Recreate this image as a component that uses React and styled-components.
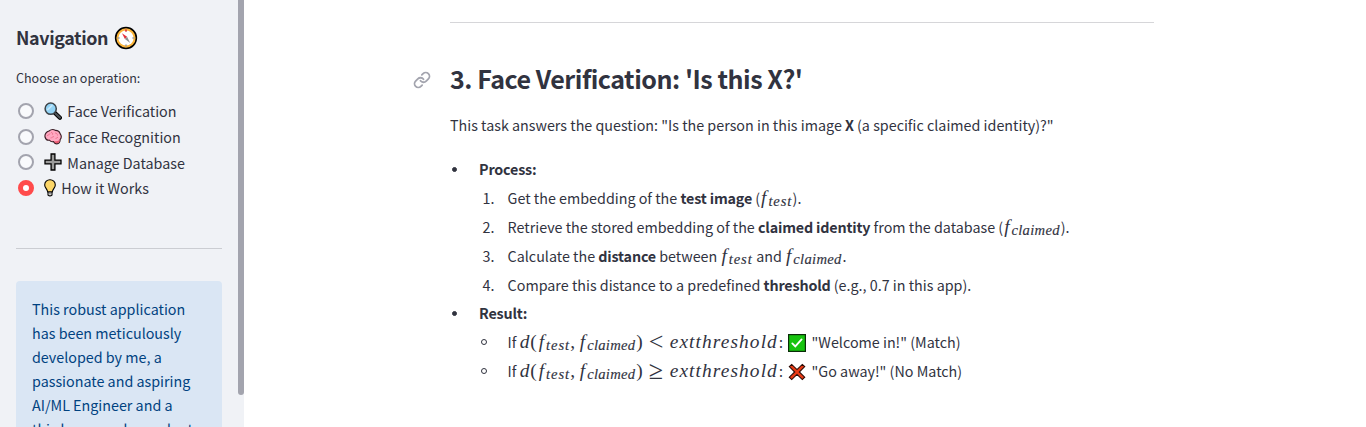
import React from 'react';
import styled, { createGlobalStyle, css } from 'styled-components';
import { Link } from 'lucide-react';

const GlobalStyle = createGlobalStyle`
  *, *::before, *::after { box-sizing: border-box; }
  html, body { margin: 0; padding: 0; overflow: hidden; }
  body {
    font-family: 'Noto Sans CJK SC', 'Noto Sans', sans-serif;
    font-size: 14.32px;
    line-height: 25.6px;
    color: #31333f;
    background: #fff;
  }
`;

const Page = styled.div`
  display: flex;
  height: 427px;
  overflow: hidden;
`;

const Sidebar = styled.aside`
  display: flex;
  flex: none;
  width: 244px;
  height: 427px;
  overflow: hidden;
  background: #f0f2f6;
`;

const SidebarContent = styled.div`
  width: 206px;
  margin-left: 16px;
  padding-top: 25px;
`;

const ScrollThumb = styled.div`
  width: 6px;
  height: 395px;
  margin-left: auto;
  border-radius: 0 0 3px 3px;
  background: #a3a4ae;
`;

const NavTitle = styled.h2`
  display: flex;
  align-items: center;
  gap: 6px;
  height: 25px;
  margin: 0;
  font-size: 17.9px;
  line-height: 25px;
  font-weight: 600;
  letter-spacing: -0.37px;
`;

const RadioLabel = styled.div`
  margin-top: 18px;
  height: 20px;
  font-size: 12.53px;
  line-height: 20px;
`;

const RadioList = styled.div`
  margin-top: 10.5px;
`;

const Option = styled.label`
  display: flex;
  align-items: center;
  height: 25.6px;
  padding-left: 2px;
  white-space: pre;
`;

const Dot = styled.span`
  flex: none;
  width: 16px;
  height: 16px;
  margin-right: 10px;
  border-radius: 50%;
  border: 2px solid #a3a4ae;
  background: #f9fafc;
  ${({ $on }) => $on && css`
    border: 5px solid #ff4b4b;
    background: #fff;
  `}
`;

const OptionText = styled.span`
  margin: -0.3px 0 0 5.3px;
`;

const Divider = styled.div`
  height: 1px;
  margin-top: ${({ $top }) => $top || 0}px;
  background: ${({ $color }) => $color};
`;

const InfoBox = styled.div`
  height: 200px;
  margin-top: 32px;
  padding: 16px;
  border-radius: 4px;
  background: #dae6f4;
  color: #004280;
  line-height: 24px;
  white-space: pre;
`;

const Main = styled.main`
  width: 704px;
  margin-left: 206px;
  padding-top: 22px;
`;

const Heading = styled.h2`
  display: flex;
  align-items: center;
  gap: 19px;
  height: 34px;
  margin: 39px 0 0 -37px;
  font-size: 25.06px;
  line-height: 32px;
  font-weight: 600;
  letter-spacing: -0.49px;
  white-space: pre;
  svg { flex: none; margin-top: 2px; }
`;

const HeadingText = styled.span`
  height: 34px;
`;

const Paragraph = styled.p`
  margin: 16.2px 0 0;
  white-space: pre;
`;

const List = styled.div`
  margin-top: 18.6px;
`;

const Item = styled.div`
  display: flex;
  align-items: center;
  height: 25.6px;
  margin-bottom: 3.2px;
  padding-left: ${({ $sub }) => ($sub ? 28.6 : 0)}px;
  white-space: pre;
`;

const Marker = styled.span`
  flex: none;
  display: flex;
  align-items: center;
  width: 29px;
  padding-left: ${({ $pad }) => $pad || 0}px;
`;

const Bullet = styled.span`
  width: ${({ $hollow }) => ($hollow ? 6 : 5)}px;
  height: ${({ $hollow }) => ($hollow ? 6 : 5)}px;
  margin-top: 1px;
  border-radius: 50%;
  border: 1px solid #31333f;
  background: ${({ $hollow }) => ($hollow ? 'transparent' : '#31333f')};
`;

const Strong = styled.strong`
  font-weight: 600;
  letter-spacing: -0.17px;
`;

const MathText = styled.span`
  display: inline-block;
  width: ${({ $w }) => $w}px;
  font-family: 'Liberation Serif', serif;
  font-style: ${({ $up }) => ($up ? 'normal' : 'italic')};
  font-size: 19.36px;
  letter-spacing: ${({ $ls }) => $ls || 0}px;
  line-height: 20px;
`;

const Variable = styled(MathText)`
  padding-left: 1px;
`;

const Operator = styled(MathText)`
  position: relative;
  top: 2px;
  font-size: 26px;
`;

const Sub = styled.span`
  position: relative;
  top: 2px;
  display: inline-block;
  width: ${({ $w }) => $w}px;
  font-family: 'Liberation Serif', serif;
  font-style: italic;
  font-size: 14.6px;
  letter-spacing: ${({ $ls }) => $ls}px;
  line-height: 16px;
  -webkit-text-stroke: 0.15px #31333f;
`;

const Glyph = styled.svg`
  flex: none;
  vertical-align: middle;
`;

const InlineGlyph = styled(Glyph)`
  position: relative;
  top: -1px;
  margin: 0 5.5px 0 5px;
`;

const Compass = () => (
  <Glyph width="24" height="24" viewBox="0 0 24 24">
    <circle cx="12" cy="12" r="10.4" fill="#fbb53a" stroke="#000" strokeWidth="1.5" />
    <circle cx="12" cy="12" r="7.6" fill="#fff" />
    <path d="M12 3.6v2M12 18.4v2M3.6 12h2M18.4 12h2" stroke="#9b9b9b" strokeWidth="1.5" />
    <path d="M12 3.4v2" stroke="#ee3b3b" strokeWidth="1.8" />
    <path d="M8 7.2l5.1 3.6-2.2 2.2z" fill="#e5313c" />
    <path d="M16.2 17l-5.3-4 2.2-2.2z" fill="#8c8f91" />
  </Glyph>
);

const Magnifier = () => (
  <Glyph width="18" height="18" viewBox="0 0 18 18">
    <path d="M10.7 10.7l5.2 5" stroke="#000" strokeWidth="4.2" strokeLinecap="round" />
    <path d="M11.7 11.7l4.2 3.9" stroke="#4d5357" strokeWidth="2.2" strokeLinecap="round" />
    <circle cx="6.7" cy="6.7" r="5.6" fill="#92d3f5" stroke="#3c4348" strokeWidth="1.5" />
    <path d="M3.2 8.2l5.2-5" stroke="#c5e7fa" strokeWidth="1.6" />
  </Glyph>
);

const Brain = () => (
  <Glyph width="18" height="18" viewBox="0 0 18 18">
    <path d="M1 9C.5 6 2.5 3.5 5 3c2-1.6 5-1.5 6.6-.6 2.2 0 4 1.6 4.6 3.4 1.3 1.7 1.2 4.2-.1 5.8.2 2.6-1.2 4.2-3.3 4.3-1.6 0-2.5-1-3.3-2.3-2 .5-3.2-.3-3.9-1.4C3.3 12.6 1.5 11 1 9z" fill="#ffa7c0" stroke="#3a1d25" strokeWidth="1.1" />
    <path d="M10 13.2c2 .3 4-.3 5.7-1.5-.1 2-1 3.4-2.9 3.5-1.5 0-2.3-.8-2.8-2z" fill="#ea5a72" />
    <path d="M3 8c1-1.5 2.5-1 3-2.5M7 4.5c1.5 0 2 1 1.5 2.2M6.5 10c1.5 0 2-1.5 3.5-1.4M11 5c1.5 0 2.5 1 2.5 2.5M11.5 10.5c1-.2 2-.8 2.5-1.5" fill="none" stroke="#ea6f8b" strokeWidth=".9" />
  </Glyph>
);

const Plus = () => (
  <Glyph width="18" height="18" viewBox="0 0 18 18">
    <path d="M7.1 1h3.8v6.1H17v3.8h-6.1V17H7.1v-6.1H1V7.1h6.1z" fill="#9b9b9a" stroke="#000" strokeWidth="1.3" />
  </Glyph>
);

const Bulb = () => (
  <Glyph width="12" height="18" viewBox="0 0 12 18">
    <path d="M4 12.5h4v3.6q-2 1.6-4 0z" fill="#d0cfce" stroke="#000" strokeWidth="1.1" />
    <path d="M6 .7a5.2 5.2 0 0 1 5.3 5.2c0 2.8-2.4 3.8-3 7H3.7c-.6-3.2-3-4.2-3-7A5.2 5.2 0 0 1 6 .7z" fill="#fcd668" stroke="#000" strokeWidth="1.1" />
    <path d="M4.3 14.3h3.4" stroke="#777" strokeWidth=".8" />
  </Glyph>
);

const Check = () => (
  <InlineGlyph width="18" height="18" viewBox="0 0 18 18">
    <rect x=".6" y=".6" width="16.8" height="16.8" fill="#17c40f" stroke="#0a2d08" strokeWidth="1.2" />
    <path d="M4.3 9.4l3 3 6.3-7" fill="none" stroke="#fff" strokeWidth="1.8" strokeLinecap="round" />
  </InlineGlyph>
);

const Cross = () => (
  <InlineGlyph width="18" height="18" viewBox="0 0 18 18">
    <path d="M1.3 3.6L3.7 1.4 9 6.6l5.3-5.2 2.4 2.2L11.3 9l5.4 5.2-2.4 2.4L9 11.4l-5.3 5.2-2.4-2.4L6.7 9z" fill="#ea3b15" stroke="#2b0903" strokeWidth="1.1" />
  </InlineGlyph>
);

const FTest = () => (
  <>
    <Variable $w={8.3}>f</Variable>
    <Sub $w={24.2} $ls={0.9}>test</Sub>
  </>
);

const FClaimed = () => (
  <>
    <Variable $w={8.3}>f</Variable>
    <Sub $w={49.2} $ls={0.3}>claimed</Sub>
  </>
);

const Condition = ({ op }) => (
  <>
    <MathText $w={10.5}>d</MathText>
    <MathText $w={7.6} $up>(</MathText>
    <FTest />
    <MathText $w={8.6} $up>,</MathText>
    <FClaimed />
    <MathText $w={12.4} $up>)</MathText>
    <Operator $w={21} $up>{op}</Operator>
    <MathText $w={109.4} $ls={1.1}>extthreshold</MathText>
  </>
);

const options = [
  { icon: <Magnifier />, label: 'Face Verification' },
  { icon: <Brain />, label: 'Face Recognition' },
  { icon: <Plus />, label: 'Manage Database' },
  { icon: <Bulb />, label: 'How it Works', on: true },
];

const NumberedItem = ({ n, children }) => (
  <Item $sub>
    <Marker $pad={4}>{n}.</Marker>
    <span>{children}</span>
  </Item>
);

const ResultItem = ({ children }) => (
  <Item $sub>
    <Marker $pad={2}><Bullet $hollow /></Marker>
    <span>{children}</span>
  </Item>
);

const TopItem = ({ children }) => (
  <Item>
    <Marker $pad={2}><Bullet /></Marker>
    <Strong>{children}</Strong>
  </Item>
);

export default function App() {
  return (
    <Page>
      <GlobalStyle />
      <Sidebar>
        <SidebarContent>
          <NavTitle>Navigation <Compass /></NavTitle>
          <RadioLabel>Choose an operation:</RadioLabel>
          <RadioList>
            {options.map(({ icon, label, on }) => (
              <Option key={label}>
                <Dot $on={on} />
                {icon}
                <OptionText>{label}</OptionText>
              </Option>
            ))}
          </RadioList>
          <Divider $top={47} $color="#cbcdd2" />
          <InfoBox>{'This robust application\nhas been meticulously\ndeveloped by me, a\npassionate and aspiring\nAI/ML Engineer and a\nthird-year undergraduate'}</InfoBox>
        </SidebarContent>
        <ScrollThumb />
      </Sidebar>
      <Main>
        <Divider $color="#d6d6d9" />
        <Heading>
          <Link size={18} strokeWidth={2.4} color="#a3a4ae" />
          <HeadingText>3. Face Verification: 'Is this X?'</HeadingText>
        </Heading>
        <Paragraph>
          This task answers the question: "Is the person in this image <Strong>X</Strong> (a specific claimed identity)?"
        </Paragraph>
        <List>
          <TopItem>Process:</TopItem>
          <NumberedItem n={1}>Get the embedding of the <Strong>test image</Strong> (<FTest />).</NumberedItem>
          <NumberedItem n={2}>Retrieve the stored embedding of the <Strong>claimed identity</Strong> from the database (<FClaimed />).</NumberedItem>
          <NumberedItem n={3}>Calculate the <Strong>distance</Strong> between <FTest /> and <FClaimed />.</NumberedItem>
          <NumberedItem n={4}>Compare this distance to a predefined <Strong>threshold</Strong> (e.g., 0.7 in this app).</NumberedItem>
          <TopItem>Result:</TopItem>
          <ResultItem>If <Condition op="<" />:<Check />"Welcome in!" (Match)</ResultItem>
          <ResultItem>If <Condition op="≥" />:<Cross />"Go away!" (No Match)</ResultItem>
        </List>
      </Main>
    </Page>
  );
}
